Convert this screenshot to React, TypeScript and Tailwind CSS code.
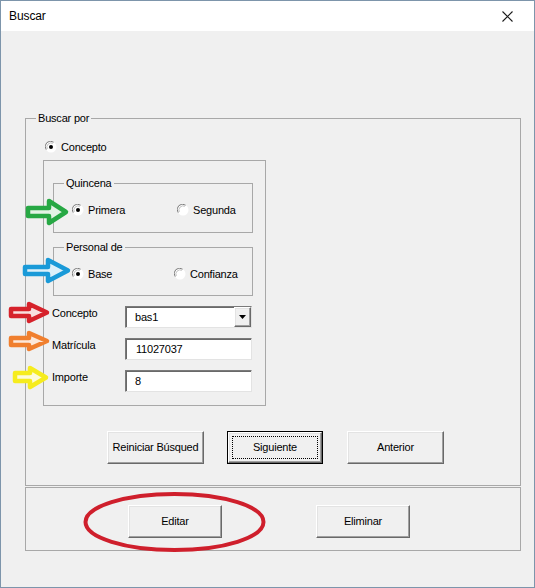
import React from "react";

function Radio({ checked }: { checked: boolean }) {
  return (
    <svg width="12" height="12" viewBox="0 0 12 12" className="shrink-0">
      <circle cx="6" cy="6" r="5.5" fill="#ffffff" />
      <path d="M1.2 8.6 A5.3 5.3 0 0 1 8.6 1.2" fill="none" stroke="#7c7c7c" strokeWidth="1" />
      <path d="M2.3 7.9 A4.2 4.2 0 0 1 7.9 2.3" fill="none" stroke="#c0c0c0" strokeWidth="1" />
      {checked && <circle cx="6" cy="6" r="2" fill="#000000" />}
    </svg>
  );
}

function RadioItem({ checked, label, w }: { checked: boolean; label: string; w?: string }) {
  return (
    <div className={`flex items-center gap-[4px] h-[14px] ${w ?? ""}`}>
      <Radio checked={checked} />
      <span className="leading-[14px]">{label}</span>
    </div>
  );
}

const bevel =
  "bg-[#f0f0f0] border border-t-[#ffffff] border-l-[#ffffff] border-r-[#696969] border-b-[#696969] shadow-[inset_-1px_-1px_0_#a0a0a0,inset_1px_1px_0_#e3e3e3]";

function Btn({ label, w }: { label: string; w: string }) {
  return (
    <div className={`h-[33px] ${w} ${bevel} flex items-center justify-center`}>
      <span>{label}</span>
    </div>
  );
}

function FocusBtn({ label, w }: { label: string; w: string }) {
  return (
    <div className={`h-[33px] ${w} border border-black`}>
      <div className={`relative h-full w-full ${bevel} flex items-center justify-center`}>
        <div className="absolute left-[3px] top-[3px] right-[3px] bottom-[3px] border border-dotted border-black" />
        <span>{label}</span>
      </div>
    </div>
  );
}

const sunken =
  "bg-white border border-t-[#7a7a7a] border-l-[#7a7a7a] border-b-[#e3e3e3] border-r-[#e3e3e3] shadow-[inset_1px_1px_0_#696969]";

function Group({ label, className, children }: { label?: string; className: string; children?: React.ReactNode }) {
  return (
    <div className={`relative border border-[#a8a8a8] ${className}`}>
      {label && (
        <span className="absolute left-[10px] top-[-8px] px-[2px] bg-[#f0f0f0] leading-[14px]">{label}</span>
      )}
      {children}
    </div>
  );
}

export default function App() {
  return (
    <div className="relative w-[535px] h-[588px] border border-[#7d95ab] flex flex-col bg-[#f0f0f0] font-['Liberation_Sans',Arial,sans-serif] text-[11px] tracking-[-0.2px] text-black overflow-hidden">
      {/* title bar */}
      <div className="h-[30px] bg-white flex items-center justify-between pl-[8px] pr-[21px] shrink-0">
        <span className="text-[12px] leading-[14px] tracking-[-0.1px]">Buscar</span>
        <svg width="11" height="11" viewBox="0 0 11 11">
          <path d="M0.5 0.5 L10.5 10.5 M10.5 0.5 L0.5 10.5" stroke="#1a1a1a" strokeWidth="1.1" />
        </svg>
      </div>

      {/* body */}
      <div className="flex-1 flex flex-col pt-[87px] pl-[24px]">
        <Group label="Buscar por" className="w-[496px] h-[368px] flex flex-col">
          <div className="ml-[19px] mt-[21px]">
            <RadioItem checked label="Concepto" />
          </div>

          <div className="ml-[17px] mt-[6px] w-[223px] h-[246px] border border-[#a8a8a8] flex flex-col">
            <Group label="Quincena" className="ml-[9px] mt-[22px] w-[200px] h-[50px]">
              <div className="mt-[19px] ml-[18px] flex items-center">
                <RadioItem checked label="Primera" w="w-[105px]" />
                <RadioItem checked={false} label="Segunda" />
              </div>
            </Group>

            <Group label="Personal de" className="ml-[9px] mt-[14px] w-[200px] h-[49px]">
              <div className="mt-[19px] ml-[18px] flex items-center">
                <RadioItem checked label="Base" w="w-[102px]" />
                <RadioItem checked={false} label="Confianza" />
              </div>
            </Group>

            <div className="ml-[8px] mt-[10px] flex items-start h-[22px]">
              <span className="w-[73px] leading-[14px]">Concepto</span>
              <div className={`w-[127px] h-[22px] ${sunken} flex items-center`}>
                <span className="flex-1 pl-[9px] leading-[14px]">bas1</span>
                <div className={`w-[17px] h-full ${bevel} flex items-center justify-center`}>
                  <svg width="7" height="4" viewBox="0 0 7 4">
                    <path d="M0 0 L7 0 L3.5 4 Z" fill="#000" />
                  </svg>
                </div>
              </div>
            </div>

            <div className="ml-[8px] mt-[10px] flex items-start h-[22px]">
              <span className="w-[73px] leading-[14px]">Matrícula</span>
              <div className={`w-[127px] h-[22px] ${sunken} flex items-center pl-[10px]`}>
                <span className="leading-[14px]">11027037</span>
              </div>
            </div>

            <div className="ml-[8px] mt-[10px] flex items-start h-[22px]">
              <span className="w-[73px] leading-[14px]">Importe</span>
              <div className={`w-[127px] h-[22px] ${sunken} flex items-center pl-[9px]`}>
                <span className="leading-[14px]">8</span>
              </div>
            </div>
          </div>

          <div className="ml-[81px] mt-[25px] flex">
            <Btn label="Reiniciar Búsqued" w="w-[97px]" />
            <div className="w-[23px]" />
            <FocusBtn label="Siguiente" w="w-[96px]" />
            <div className="w-[24px]" />
            <Btn label="Anterior" w="w-[97px]" />
          </div>
        </Group>

        <Group className="mt-[1px] w-[496px] h-[64px]">
          <div className="ml-[102px] mt-[17px] flex gap-[94px]">
            <Btn label="Editar" w="w-[94px]" />
            <Btn label="Eliminar" w="w-[94px]" />
          </div>
        </Group>
      </div>

      {/* annotations */}
      <svg
        className="absolute left-0 top-0 pointer-events-none"
        width="535"
        height="588"
        viewBox="0 0 535 588"
      >
        <polygon
          points="27,207 48,207 48,200 65,211 48,222 48,215 27,215"
          fill="#e3f3e5"
          stroke="#27a844"
          strokeWidth="4.5"
          strokeLinejoin="round"
        />
        <polygon
          points="24,266 47,266 47,259 67,269.5 47,280 47,273 24,273"
          fill="#dcf0fa"
          stroke="#1a9ad8"
          strokeWidth="4.5"
          strokeLinejoin="round"
        />
        <polygon
          points="10,308 28,308 28,303 46,311.5 28,320 28,315 10,315"
          fill="#f8dfdf"
          stroke="#d6222b"
          strokeWidth="4.5"
          strokeLinejoin="round"
        />
        <polygon
          points="10,337 28,337 28,332 46,340 28,348 28,344 10,344"
          fill="#fce8da"
          stroke="#f07f2e"
          strokeWidth="4.5"
          strokeLinejoin="round"
        />
        <polygon
          points="14,372 29,372 29,367 45,376.5 29,386 29,380 14,380"
          fill="#fdfbd8"
          stroke="#f6ec1e"
          strokeWidth="4.5"
          strokeLinejoin="round"
        />
        <ellipse cx="173.5" cy="521" rx="89" ry="28" fill="none" stroke="#cf1f2c" strokeWidth="4" />
      </svg>
    </div>
  );
}
